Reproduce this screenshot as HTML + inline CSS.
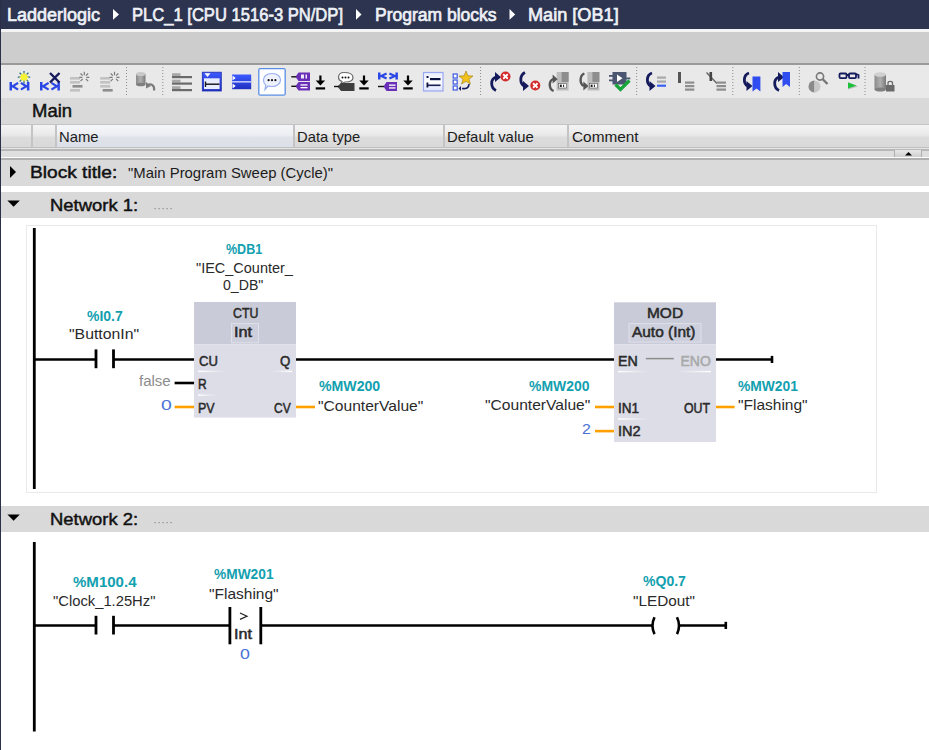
<!DOCTYPE html><html><head><meta charset="utf-8"><style>
html,body{margin:0;padding:0;width:929px;height:750px;overflow:hidden;background:#fff;font-family:"Liberation Sans",sans-serif;}
body{position:relative;}
</style></head><body>
<div style="position:absolute;left:0px;top:0px;width:929px;height:29px;background:#2d3450"></div>
<div style="position:absolute;left:7.14px;top:6px;font-size:18.8px;line-height:18.8px;font-weight:normal;-webkit-text-stroke:0.7px #eef1f6;color:#eef1f6;white-space:nowrap;transform-origin:0 0;transform:scaleX(0.9573)">Ladderlogic</div>
<div style="position:absolute;left:132.42px;top:6px;font-size:18.8px;line-height:18.8px;font-weight:normal;-webkit-text-stroke:0.7px #eef1f6;color:#eef1f6;white-space:nowrap;transform-origin:0 0;transform:scaleX(0.8827)">PLC_1 [CPU 1516-3 PN/DP]</div>
<div style="position:absolute;left:374.97px;top:6px;font-size:18.8px;line-height:18.8px;font-weight:normal;-webkit-text-stroke:0.7px #eef1f6;color:#eef1f6;white-space:nowrap;transform-origin:0 0;transform:scaleX(0.9318)">Program blocks</div>
<div style="position:absolute;left:528.23px;top:6px;font-size:18.8px;line-height:18.8px;font-weight:normal;-webkit-text-stroke:0.7px #eef1f6;color:#eef1f6;white-space:nowrap;transform-origin:0 0;transform:scaleX(0.9652)">Main [OB1]</div>
<svg style="position:absolute;left:0;top:0" width="929" height="29"><polygon points="113,9 119,14.4 113,19.7" fill="#fff"/><polygon points="356,9 361.5,14.4 356,19.7" fill="#fff"/><polygon points="509.5,9 515.2,14.4 509.5,19.7" fill="#fff"/></svg>
<div style="position:absolute;left:0px;top:29px;width:929px;height:3px;background:#f4f4f4"></div>
<div style="position:absolute;left:0px;top:32px;width:929px;height:31px;background:#cdcdcd"></div>
<div style="position:absolute;left:0px;top:63px;width:929px;height:2px;background:#9a9a9a"></div>
<div style="position:absolute;left:0px;top:65px;width:929px;height:33px;background:#e9e9e9"></div>
<div style="position:absolute;left:0px;top:98px;width:929px;height:26px;background:#d9d9d9"></div>
<div style="position:absolute;left:31.94px;top:103px;font-size:17.5px;line-height:17.5px;font-weight:normal;-webkit-text-stroke:0.45px #111;color:#111;white-space:nowrap;transform-origin:0 0;transform:scaleX(1.0556)">Main</div>
<div style="position:absolute;left:0px;top:124px;width:929px;height:1px;background:#c4c4c4"></div>
<div style="position:absolute;left:0px;top:125px;width:929px;height:22px;background:linear-gradient(#f4f4f4,#e9e9e9 45%,#dcdcdc 58%,#d9d9d9)"></div>
<div style="position:absolute;left:56px;top:125px;width:237px;height:22px;background:linear-gradient(#f5f6f9,#eceef3 45%,#dfe2e9 58%,#dce0e8)"></div>
<div style="position:absolute;left:31px;top:125px;width:1.5px;height:22px;background:#c4c4c4"></div>
<div style="position:absolute;left:55px;top:125px;width:1.5px;height:22px;background:#c4c4c4"></div>
<div style="position:absolute;left:293px;top:125px;width:1.5px;height:22px;background:#c4c4c4"></div>
<div style="position:absolute;left:443px;top:125px;width:1.5px;height:22px;background:#c4c4c4"></div>
<div style="position:absolute;left:567px;top:125px;width:1.5px;height:22px;background:#c4c4c4"></div>
<div style="position:absolute;left:0px;top:147px;width:929px;height:1px;background:#c0c0c0"></div>
<div style="position:absolute;left:0px;top:148px;width:929px;height:1px;background:#e6e6e6"></div>
<div style="position:absolute;left:0px;top:149px;width:929px;height:1.5px;background:#b8b8b8"></div>
<div style="position:absolute;left:0px;top:150.5px;width:929px;height:6.5px;background:#dedede"></div>
<div style="position:absolute;left:0px;top:157px;width:929px;height:1px;background:#fcfcfc"></div>
<div style="position:absolute;left:0px;top:158px;width:929px;height:1.5px;background:#b0b0b0"></div>
<div style="position:absolute;left:894px;top:150px;width:28px;height:7px;background:linear-gradient(#e8e8e8,#cfcfcf);border-left:1px solid #b0b0b0;border-right:1px solid #b0b0b0;box-sizing:border-box"></div>
<svg style="position:absolute;left:894px;top:150px" width="28" height="8"><polygon points="11,5.5 18,5.5 14.5,2" fill="#000"/></svg>
<div style="position:absolute;left:59.26px;top:130px;font-size:14.3px;line-height:14.3px;font-weight:normal;color:#1c1c1c;white-space:nowrap;transform-origin:0 0;transform:scaleX(1.0378)">Name</div>
<div style="position:absolute;left:296.77px;top:130px;font-size:14.3px;line-height:14.3px;font-weight:normal;color:#1c1c1c;white-space:nowrap;transform-origin:0 0;transform:scaleX(1.0333)">Data type</div>
<div style="position:absolute;left:446.86px;top:130px;font-size:14.3px;line-height:14.3px;font-weight:normal;color:#1c1c1c;white-space:nowrap;transform-origin:0 0;transform:scaleX(1.0390)">Default value</div>
<div style="position:absolute;left:571.82px;top:130px;font-size:14.3px;line-height:14.3px;font-weight:normal;color:#1c1c1c;white-space:nowrap;transform-origin:0 0;transform:scaleX(1.0754)">Comment</div>
<div style="position:absolute;left:0px;top:159.5px;width:929px;height:26px;background:#dadada"></div>
<svg style="position:absolute;left:0;top:160px" width="30" height="26"><polygon points="10,6 16,12 10,18" fill="#000"/></svg>
<div style="position:absolute;left:29.86px;top:165px;font-size:16.8px;line-height:16.8px;font-weight:normal;-webkit-text-stroke:0.45px #111;color:#111;white-space:nowrap;transform-origin:0 0;transform:scaleX(1.1405)">Block title:</div>
<div style="position:absolute;left:128.16px;top:166px;font-size:14.3px;line-height:14.3px;font-weight:normal;color:#1c1c1c;white-space:nowrap;transform-origin:0 0;transform:scaleX(1.0415)">&quot;Main Program Sweep (Cycle)&quot;</div>
<div style="position:absolute;left:0px;top:185.5px;width:929px;height:6.5px;background:#ffffff"></div>
<div style="position:absolute;left:0px;top:192px;width:929px;height:26px;background:#d9d9d9"></div>
<svg style="position:absolute;left:0;top:192px" width="30" height="26"><polygon points="7.4,8.5 19.8,8.5 13.6,14.7" fill="#000"/></svg>
<div style="position:absolute;left:49.73px;top:197px;font-size:17.2px;line-height:17.2px;font-weight:normal;-webkit-text-stroke:0.45px #111;color:#111;white-space:nowrap;transform-origin:0 0;transform:scaleX(1.0725)">Network 1:</div>
<svg style="position:absolute;left:150px;top:205px" width="30" height="8"><g fill="#8a8a8a"><rect x="4.5" y="3" width="1.2" height="1.2"/><rect x="8.5" y="3" width="1.2" height="1.2"/><rect x="12.5" y="3" width="1.2" height="1.2"/><rect x="16.5" y="3" width="1.2" height="1.2"/><rect x="20.5" y="3" width="1.2" height="1.2"/></g></svg>
<div style="position:absolute;left:0px;top:218px;width:929px;height:288px;background:#fff"></div>
<div style="position:absolute;left:26px;top:225px;width:851px;height:268px;border:1px solid #e9e9e9;box-sizing:border-box"></div>
<div style="position:absolute;left:0px;top:506px;width:929px;height:26px;background:#d9d9d9"></div>
<svg style="position:absolute;left:0;top:506px" width="30" height="26"><polygon points="7.4,8.5 19.8,8.5 13.6,14.7" fill="#000"/></svg>
<div style="position:absolute;left:49.73px;top:511px;font-size:17.2px;line-height:17.2px;font-weight:normal;-webkit-text-stroke:0.45px #111;color:#111;white-space:nowrap;transform-origin:0 0;transform:scaleX(1.0725)">Network 2:</div>
<svg style="position:absolute;left:150px;top:519px" width="30" height="8"><g fill="#8a8a8a"><rect x="4.5" y="3" width="1.2" height="1.2"/><rect x="8.5" y="3" width="1.2" height="1.2"/><rect x="12.5" y="3" width="1.2" height="1.2"/><rect x="16.5" y="3" width="1.2" height="1.2"/><rect x="20.5" y="3" width="1.2" height="1.2"/></g></svg>
<div style="position:absolute;left:0px;top:532px;width:929px;height:218px;background:#fff"></div>
<svg style="position:absolute;left:0;top:0" width="929" height="750"><line x1="34.3" y1="228" x2="34.3" y2="489" stroke="#000" stroke-width="2.8"/><line x1="34" y1="359.5" x2="95.5" y2="359.5" stroke="#000" stroke-width="2.6"/><line x1="96" y1="349.4" x2="96" y2="368.2" stroke="#000" stroke-width="2.8"/><line x1="113.5" y1="349.4" x2="113.5" y2="368.2" stroke="#000" stroke-width="2.8"/><line x1="113" y1="359.5" x2="194" y2="359.5" stroke="#000" stroke-width="2.6"/><rect x="194" y="302" width="102" height="42.3" fill="#c9cbd8" stroke="none"/><rect x="194" y="344.3" width="102" height="73.3" fill="#dcdde6" stroke="none"/><rect x="231.5" y="323.6" width="27" height="19.2" fill="#cdd0dc" stroke="#dfe0e8"/><defs><linearGradient id="ulR" x1="0" x2="1"><stop offset="0" stop-color="#fff" stop-opacity="1"/><stop offset="1" stop-color="#fff" stop-opacity="0"/></linearGradient><linearGradient id="ulL" x1="1" x2="0"><stop offset="0" stop-color="#fff" stop-opacity="1"/><stop offset="1" stop-color="#fff" stop-opacity="0"/></linearGradient></defs><rect x="198" y="370.6" width="28" height="1.5" fill="url(#ulR)" stroke="none"/><rect x="272" y="370.6" width="20" height="1.5" fill="url(#ulL)" stroke="none"/><rect x="198" y="394.4" width="18" height="1.5" fill="url(#ulR)" stroke="none"/><line x1="174.6" y1="383" x2="194" y2="383" stroke="#000" stroke-width="2.6"/><line x1="174.6" y1="407.0" x2="194" y2="407.0" stroke="#ffa000" stroke-width="2.6"/><line x1="296" y1="359.5" x2="614" y2="359.5" stroke="#000" stroke-width="2.6"/><line x1="296" y1="407.0" x2="315" y2="407.0" stroke="#ffa000" stroke-width="2.6"/><rect x="614" y="302.3" width="102" height="42" fill="#c9cbd8" stroke="none"/><rect x="614" y="344.3" width="102" height="97.7" fill="#dcdde6" stroke="none"/><rect x="629" y="323.6" width="72" height="18.5" fill="#cdd0dc" stroke="#dfe0e8"/><line x1="645.8" y1="358.6" x2="673.8" y2="358.6" stroke="#8d8d8d" stroke-width="1.5"/><rect x="618" y="370.8" width="30" height="1.5" fill="url(#ulR)" stroke="none"/><rect x="678" y="370.8" width="33" height="1.5" fill="url(#ulL)" stroke="none"/><rect x="618" y="418.2" width="32" height="1.5" fill="url(#ulR)" stroke="none"/><line x1="595" y1="407.0" x2="614" y2="407.0" stroke="#ffa000" stroke-width="2.6"/><line x1="595" y1="431.1" x2="614" y2="431.1" stroke="#ffa000" stroke-width="2.6"/><line x1="716" y1="359.5" x2="773" y2="359.5" stroke="#000" stroke-width="2.6"/><line x1="772" y1="355.9" x2="772" y2="363" stroke="#000" stroke-width="2.6"/><line x1="716" y1="407.0" x2="734.6" y2="407.0" stroke="#ffa000" stroke-width="2.6"/><line x1="34.3" y1="542" x2="34.3" y2="731.5" stroke="#000" stroke-width="2.8"/><line x1="34" y1="625.5" x2="95.5" y2="625.5" stroke="#000" stroke-width="2.6"/><line x1="96" y1="615.8" x2="96" y2="634.5" stroke="#000" stroke-width="2.8"/><line x1="113.5" y1="615.8" x2="113.5" y2="634.5" stroke="#000" stroke-width="2.8"/><line x1="113" y1="625.5" x2="230" y2="625.5" stroke="#000" stroke-width="2.6"/><line x1="229.9" y1="607" x2="229.9" y2="644.3" stroke="#000" stroke-width="2.8"/><line x1="260.8" y1="607" x2="260.8" y2="644.3" stroke="#000" stroke-width="2.8"/><line x1="260" y1="625.5" x2="652" y2="625.5" stroke="#000" stroke-width="2.6"/><path d="M654.5,617.3 Q650.5,625.7 654.5,634.1" fill="none" stroke="#000" stroke-width="2.6"/><path d="M677,617.3 Q681,625.7 677,634.1" fill="none" stroke="#000" stroke-width="2.6"/><line x1="679.5" y1="625.5" x2="727" y2="625.5" stroke="#000" stroke-width="2.6"/><line x1="725.8" y1="621.8" x2="725.8" y2="629" stroke="#000" stroke-width="2.6"/><path d="M240,613 L247,616.2 L240,619.4" fill="none" stroke="#222" stroke-width="1.2"/></svg>
<div style="position:absolute;left:87.10px;top:309px;font-size:14.8px;line-height:14.8px;font-weight:bold;color:#12a0b0;white-space:nowrap;transform-origin:0 0;transform:scaleX(0.9432)">%I0.7</div>
<div style="position:absolute;left:69.13px;top:327px;font-size:14.8px;line-height:14.8px;font-weight:normal;color:#2a2a2a;white-space:nowrap;transform-origin:0 0;transform:scaleX(1.0672)">&quot;ButtonIn&quot;</div>
<div style="position:absolute;left:226.10px;top:242px;font-size:14.8px;line-height:14.8px;font-weight:bold;color:#12a0b0;white-space:nowrap;transform-origin:0 0;transform:scaleX(0.8452)">%DB1</div>
<div style="position:absolute;left:195.52px;top:261px;font-size:14.8px;line-height:14.8px;font-weight:normal;color:#2a2a2a;white-space:nowrap;transform-origin:0 0;transform:scaleX(0.9786)">&quot;IEC_Counter_</div>
<div style="position:absolute;left:222.75px;top:278px;font-size:14.8px;line-height:14.8px;font-weight:normal;color:#2a2a2a;white-space:nowrap;transform-origin:0 0;transform:scaleX(0.9537)">0_DB&quot;</div>
<div style="position:absolute;left:232.60px;top:306px;font-size:14px;line-height:14px;font-weight:normal;-webkit-text-stroke:0.5px #2a2a2a;color:#2a2a2a;white-space:nowrap;transform-origin:0 0;transform:scaleX(0.8821)">CTU</div>
<div style="position:absolute;left:233.64px;top:325px;font-size:14px;line-height:14px;font-weight:normal;-webkit-text-stroke:0.5px #2a2a2a;color:#2a2a2a;white-space:nowrap;transform-origin:0 0;transform:scaleX(1.1600)">Int</div>
<div style="position:absolute;left:198.90px;top:354px;font-size:14px;line-height:14px;font-weight:normal;-webkit-text-stroke:0.5px #2a2a2a;color:#2a2a2a;white-space:nowrap;transform-origin:0 0;transform:scaleX(0.9316)">CU</div>
<div style="position:absolute;left:280.00px;top:354px;font-size:14px;line-height:14px;font-weight:normal;-webkit-text-stroke:0.5px #2a2a2a;color:#2a2a2a;white-space:nowrap;transform-origin:0 0;transform:scaleX(0.9455)">Q</div>
<div style="position:absolute;left:198.04px;top:377px;font-size:14px;line-height:14px;font-weight:normal;-webkit-text-stroke:0.5px #2a2a2a;color:#2a2a2a;white-space:nowrap;transform-origin:0 0;transform:scaleX(0.8556)">R</div>
<div style="position:absolute;left:198.01px;top:401px;font-size:14px;line-height:14px;font-weight:normal;-webkit-text-stroke:0.5px #2a2a2a;color:#2a2a2a;white-space:nowrap;transform-origin:0 0;transform:scaleX(0.8889)">PV</div>
<div style="position:absolute;left:273.50px;top:401px;font-size:14px;line-height:14px;font-weight:normal;-webkit-text-stroke:0.5px #2a2a2a;color:#2a2a2a;white-space:nowrap;transform-origin:0 0;transform:scaleX(0.8550)">CV</div>
<div style="position:absolute;left:138.90px;top:374px;font-size:14px;line-height:14px;font-weight:normal;color:#8c8c8c;white-space:nowrap;transform-origin:0 0;transform:scaleX(1.0724)">false</div>
<div style="position:absolute;left:161.32px;top:398px;font-size:14px;line-height:14px;font-weight:normal;color:#4a72d6;white-space:nowrap;transform-origin:0 0;transform:scaleX(1.3833)">0</div>
<div style="position:absolute;left:318.60px;top:379px;font-size:14.8px;line-height:14.8px;font-weight:bold;color:#12a0b0;white-space:nowrap;transform-origin:0 0;transform:scaleX(0.9547)">%MW200</div>
<div style="position:absolute;left:317.55px;top:399px;font-size:14.8px;line-height:14.8px;font-weight:normal;color:#2a2a2a;white-space:nowrap;transform-origin:0 0;transform:scaleX(1.0541)">&quot;CounterValue&quot;</div>
<div style="position:absolute;left:529.00px;top:379px;font-size:14.8px;line-height:14.8px;font-weight:bold;color:#12a0b0;white-space:nowrap;transform-origin:0 0;transform:scaleX(0.9422)">%MW200</div>
<div style="position:absolute;left:484.95px;top:398px;font-size:14.8px;line-height:14.8px;font-weight:normal;color:#2a2a2a;white-space:nowrap;transform-origin:0 0;transform:scaleX(1.0541)">&quot;CounterValue&quot;</div>
<div style="position:absolute;left:582.07px;top:422px;font-size:14px;line-height:14px;font-weight:normal;color:#4a72d6;white-space:nowrap;transform-origin:0 0;transform:scaleX(1.1333)">2</div>
<div style="position:absolute;left:646.60px;top:306px;font-size:14px;line-height:14px;font-weight:normal;-webkit-text-stroke:0.5px #2a2a2a;color:#2a2a2a;white-space:nowrap;transform-origin:0 0;transform:scaleX(1.1032)">MOD</div>
<div style="position:absolute;left:632.20px;top:325px;font-size:14px;line-height:14px;font-weight:normal;-webkit-text-stroke:0.5px #2a2a2a;color:#2a2a2a;white-space:nowrap;transform-origin:0 0;transform:scaleX(1.1018)">Auto (Int)</div>
<div style="position:absolute;left:617.68px;top:354px;font-size:14px;line-height:14px;font-weight:normal;-webkit-text-stroke:0.5px #2a2a2a;color:#2a2a2a;white-space:nowrap;transform-origin:0 0;transform:scaleX(1.0167)">EN</div>
<div style="position:absolute;left:680.50px;top:354px;font-size:14px;line-height:14px;font-weight:normal;-webkit-text-stroke:0.5px #a9a9a9;color:#a9a9a9;white-space:nowrap;transform-origin:0 0;transform:scaleX(1.0000)">ENO</div>
<div style="position:absolute;left:617.73px;top:401px;font-size:14px;line-height:14px;font-weight:normal;-webkit-text-stroke:0.5px #2a2a2a;color:#2a2a2a;white-space:nowrap;transform-origin:0 0;transform:scaleX(0.9667)">IN1</div>
<div style="position:absolute;left:684.40px;top:401px;font-size:14px;line-height:14px;font-weight:normal;-webkit-text-stroke:0.5px #2a2a2a;color:#2a2a2a;white-space:nowrap;transform-origin:0 0;transform:scaleX(0.8833)">OUT</div>
<div style="position:absolute;left:617.66px;top:424px;font-size:14px;line-height:14px;font-weight:normal;-webkit-text-stroke:0.5px #2a2a2a;color:#2a2a2a;white-space:nowrap;transform-origin:0 0;transform:scaleX(1.0381)">IN2</div>
<div style="position:absolute;left:738.40px;top:379px;font-size:14.8px;line-height:14.8px;font-weight:bold;color:#12a0b0;white-space:nowrap;transform-origin:0 0;transform:scaleX(0.9344)">%MW201</div>
<div style="position:absolute;left:737.95px;top:398px;font-size:14.8px;line-height:14.8px;font-weight:normal;color:#2a2a2a;white-space:nowrap;transform-origin:0 0;transform:scaleX(1.0477)">&quot;Flashing&quot;</div>
<div style="position:absolute;left:73.40px;top:575px;font-size:14.8px;line-height:14.8px;font-weight:bold;color:#12a0b0;white-space:nowrap;transform-origin:0 0;transform:scaleX(1.0159)">%M100.4</div>
<div style="position:absolute;left:53.00px;top:594px;font-size:14.8px;line-height:14.8px;font-weight:normal;color:#2a2a2a;white-space:nowrap;transform-origin:0 0;transform:scaleX(0.9980)">&quot;Clock_1.25Hz&quot;</div>
<div style="position:absolute;left:213.90px;top:567px;font-size:14.8px;line-height:14.8px;font-weight:bold;color:#12a0b0;white-space:nowrap;transform-origin:0 0;transform:scaleX(0.9281)">%MW201</div>
<div style="position:absolute;left:209.25px;top:587px;font-size:14.8px;line-height:14.8px;font-weight:normal;color:#2a2a2a;white-space:nowrap;transform-origin:0 0;transform:scaleX(1.0477)">&quot;Flashing&quot;</div>
<div style="position:absolute;left:234.05px;top:627px;font-size:14px;line-height:14px;font-weight:normal;-webkit-text-stroke:0.5px #2a2a2a;color:#2a2a2a;white-space:nowrap;transform-origin:0 0;transform:scaleX(1.1533)">Int</div>
<div style="position:absolute;left:239.53px;top:647px;font-size:14px;line-height:14px;font-weight:normal;color:#4a72d6;white-space:nowrap;transform-origin:0 0;transform:scaleX(1.2667)">0</div>
<div style="position:absolute;left:643.20px;top:574px;font-size:14.8px;line-height:14.8px;font-weight:bold;color:#12a0b0;white-space:nowrap;transform-origin:0 0;transform:scaleX(0.9489)">%Q0.7</div>
<div style="position:absolute;left:632.57px;top:594px;font-size:14.8px;line-height:14.8px;font-weight:normal;color:#2a2a2a;white-space:nowrap;transform-origin:0 0;transform:scaleX(1.0345)">&quot;LEDout&quot;</div>
<div style="position:absolute;left:0px;top:0px;width:1px;height:750px;background:#2a3048"></div>
<svg style="position:absolute;left:0;top:0" width="929" height="98"><rect x="9.5" y="82" width="2.5" height="8.5" fill="#2b47e6"/><path d="M18.1,82.9 L12.7,86.25 L18.1,89.6" fill="none" stroke="#2b47e6" stroke-width="2.2"/><rect x="11.5" y="85.25" width="2.5" height="2" fill="#2b47e6"/><path d="M20.9,82.9 L26.3,86.25 L20.9,89.6" fill="none" stroke="#2b47e6" stroke-width="2.2"/><rect x="25.0" y="85.25" width="2.5" height="2" fill="#2b47e6"/><rect x="26.9" y="82" width="2.5" height="8.5" fill="#2b47e6"/><g stroke="#2a6a8a" stroke-width="1.3"><path d="M24,71 L24,83.5 M17.8,77.2 L30.2,77.2 M19.6,72.8 L28.4,81.6 M28.4,72.8 L19.6,81.6"/></g><g stroke="#f6f22a" stroke-width="1.4"><path d="M24,72.8 L24,81.6 M19.6,77.2 L28.4,77.2 M21,74.2 L27,80.2 M27,74.2 L21,80.2"/></g><circle cx="24" cy="77.2" r="3" fill="#f8f430"/><rect x="40" y="82" width="2.5" height="8.5" fill="#2b47e6"/><path d="M48.6,82.9 L43.2,86.25 L48.6,89.6" fill="none" stroke="#2b47e6" stroke-width="2.2"/><rect x="42" y="85.25" width="2.5" height="2" fill="#2b47e6"/><path d="M51.4,82.9 L56.8,86.25 L51.4,89.6" fill="none" stroke="#2b47e6" stroke-width="2.2"/><rect x="55.5" y="85.25" width="2.5" height="2" fill="#2b47e6"/><rect x="57.4" y="82" width="2.5" height="8.5" fill="#2b47e6"/><path d="M50,73 L59.5,82.5 M59.5,73 L50,82.5" stroke="#141a5c" stroke-width="2.4"/><rect x="70" y="77" width="10" height="2.6" fill="#c2c2c2"/><rect x="70" y="81" width="10" height="2.6" fill="#c2c2c2"/><rect x="72.5" y="85" width="10" height="2.6" fill="#8d8d8d"/><rect x="70" y="89" width="10" height="2.6" fill="#c2c2c2"/><g stroke="#7a7a7a" stroke-width="1.2"><path d="M84.3,71.8 L84.3,75.3 M89.3,77.3 L86.3,77.3 M80.5,73.5 L82.7,75.7 M88.1,73.5 L85.89999999999999,75.7 M88.1,81.1 L85.89999999999999,78.89999999999999 M80.5,81.1 L82.7,78.89999999999999 M79.3,77.3 L82.3,77.3"/></g><rect x="100.2" y="77" width="10" height="2.6" fill="#c2c2c2"/><rect x="100.2" y="81" width="10" height="2.6" fill="#c2c2c2"/><rect x="100.2" y="85" width="10" height="2.6" fill="#c2c2c2"/><rect x="102.7" y="89" width="10" height="2.6" fill="#8d8d8d"/><g stroke="#7a7a7a" stroke-width="1.2"><path d="M114.5,71.8 L114.5,75.3 M119.5,77.3 L116.5,77.3 M110.7,73.5 L112.9,75.7 M118.3,73.5 L116.1,75.7 M118.3,81.1 L116.1,78.89999999999999 M110.7,81.1 L112.9,78.89999999999999 M109.5,77.3 L112.5,77.3"/></g><line x1="126.5" y1="67" x2="126.5" y2="95.5" stroke="#8c8c8c" stroke-width="1" stroke-dasharray="1,2"/><defs><linearGradient id="cyl" x1="0" x2="1"><stop offset="0" stop-color="#8a8a8a"/><stop offset="0.5" stop-color="#b0b0b0"/><stop offset="1" stop-color="#7a7a7a"/></linearGradient></defs><rect x="136" y="74" width="9.5" height="10.5" fill="url(#cyl)"/><ellipse cx="140.75" cy="74" rx="4.75" ry="2" fill="#c8c8c8"/><ellipse cx="140.75" cy="84.5" rx="4.75" ry="1.8" fill="#7f7f7f"/><path d="M147.5,85 C151,83 155,85.5 154,90.5" fill="none" stroke="#7c7c7c" stroke-width="2.2"/><polygon points="146,82 146,88.5 151,86" fill="#7c7c7c"/><line x1="162.8" y1="67" x2="162.8" y2="95.5" stroke="#8c8c8c" stroke-width="1" stroke-dasharray="1,2"/><rect x="172" y="73.2" width="8.5" height="2.8" fill="#a8a8a8"/><rect x="172" y="76" width="20" height="2.2" fill="#6a6a6a"/><rect x="172" y="79.7" width="8.5" height="2.8" fill="#a8a8a8"/><rect x="172" y="82.5" width="20" height="2.2" fill="#6a6a6a"/><rect x="172" y="86.2" width="8.5" height="2.8" fill="#a8a8a8"/><rect x="172" y="89" width="20" height="2.2" fill="#6a6a6a"/><defs><linearGradient id="bl" x1="0" x2="0" y1="0" y2="1"><stop offset="0" stop-color="#3d5bff"/><stop offset="1" stop-color="#1f2fc0"/></linearGradient></defs><rect x="202.3" y="72.2" width="19" height="18.8" fill="url(#bl)" stroke="#2030b0" stroke-width="0.8"/><rect x="204" y="78.3" width="15.6" height="10.8" fill="#e8ecff"/><polygon points="204.5,73.3 210.5,73.3 207.5,77" fill="#fff"/><rect x="205" y="83.5" width="14.5" height="1.4" fill="#111"/><rect x="204.8" y="81.5" width="1.4" height="5.4" fill="#111"/><rect x="232" y="74.5" width="19.2" height="14.7" fill="url(#bl)"/><rect x="232" y="81.2" width="19.2" height="1.3" fill="#dde4ff"/><polygon points="232.5,75.5 235.7,78 232.5,80.5" fill="#fff"/><polygon points="232.5,83.5 235.7,86 232.5,88.5" fill="#fff"/><rect x="258.8" y="68.6" width="26.4" height="26.6" rx="1.5" fill="#fbfdff" stroke="#5d8ee6" stroke-width="1.3"/><path d="M272,73.5 C277.5,73.5 280.5,76.5 280.5,80 C280.5,84 276.5,86.5 272,86.5 C270.5,86.5 269,86.3 268,86 L265,89.5 L265.8,85 C264,83.8 263.5,82 263.5,80 C263.5,76.5 266.5,73.5 272,73.5 Z" fill="#eef2ff" stroke="#9aaef0" stroke-width="1.2"/><circle cx="268.6" cy="80.2" r="1.1" fill="#111"/><circle cx="272" cy="80.2" r="1.1" fill="#111"/><circle cx="275.4" cy="80.2" r="1.1" fill="#111"/><polygon points="295.5,76.8 298.5,72.5 310,72.5 310,81.1 298.5,81.1" fill="#6a2fb8"/><rect x="291.3" y="76.1" width="5" height="1.4" fill="#111"/><polygon points="295.5,86.3 298.5,82 310,82 310,90.6 298.5,90.6" fill="#6a2fb8"/><rect x="291.3" y="85.6" width="5" height="1.4" fill="#111"/><rect x="301" y="74.5" width="3" height="4" fill="#fff" opacity="0.9"/><rect x="305.5" y="74.5" width="1.5" height="4" fill="#fff" opacity="0.9"/><rect x="300.5" y="84.3" width="7" height="1.3" fill="#fff"/><rect x="300.5" y="87" width="7" height="1.3" fill="#fff"/><rect x="319.29999999999995" y="75.5" width="2.2" height="6" fill="#000"/><polygon points="315.7,80.5 325.09999999999997,80.5 320.4,85.5" fill="#000"/><rect x="315.7" y="87.3" width="9.4" height="2.2" fill="#000"/><path d="M344,72.5 C350,72.5 353,74.5 353,77.5 C353,80.5 349.5,82 345,82 L341,84 L342,81.5 C339.5,80.5 338.5,79 338.5,77.5 C338.5,74.5 340.5,72.5 344,72.5Z" fill="#fff" stroke="#6a6a6a" stroke-width="1.2"/><circle cx="342.5" cy="77.5" r="1" fill="#111"/><circle cx="345.5" cy="77.5" r="1" fill="#111"/><circle cx="348.5" cy="77.5" r="1" fill="#111"/><polygon points="337.5,86.5 341,83 354.5,83 354.5,91 341,91" fill="#3e3e3e"/><rect x="334" y="85.8" width="5" height="1.4" fill="#111"/><rect x="362.9" y="75.5" width="2.2" height="6" fill="#000"/><polygon points="359.3,80.5 368.7,80.5 364,85.5" fill="#000"/><rect x="359.3" y="87.3" width="9.4" height="2.2" fill="#000"/><rect x="378" y="72.5" width="2.5" height="7" fill="#2b47e6"/><path d="M386.6,73.4 L381.2,76.0 L386.6,78.6" fill="none" stroke="#2b47e6" stroke-width="2.2"/><rect x="380" y="75.0" width="2.5" height="2" fill="#2b47e6"/><path d="M389.4,73.4 L394.8,76.0 L389.4,78.6" fill="none" stroke="#2b47e6" stroke-width="2.2"/><rect x="393.5" y="75.0" width="2.5" height="2" fill="#2b47e6"/><rect x="395.4" y="72.5" width="2.5" height="7" fill="#2b47e6"/><polygon points="383.5,86.5 386.5,82 397,82 397,91 386.5,91" fill="#6a2fb8"/><rect x="378" y="85.8" width="6" height="1.4" fill="#111"/><rect x="389" y="84.5" width="6.5" height="1.3" fill="#fff"/><rect x="389" y="87.3" width="6.5" height="1.3" fill="#fff"/><rect x="406.9" y="75.5" width="2.2" height="6" fill="#000"/><polygon points="403.3,80.5 412.7,80.5 408,85.5" fill="#000"/><rect x="403.3" y="87.3" width="9.4" height="2.2" fill="#000"/><defs><linearGradient id="lb" x1="0" x2="0" y1="0" y2="1"><stop offset="0" stop-color="#e8ecff"/><stop offset="0.5" stop-color="#ffffff"/><stop offset="1" stop-color="#dde3ff"/></linearGradient></defs><rect x="423.5" y="72.5" width="19.5" height="18.5" fill="url(#lb)" stroke="#9aa8f0" stroke-width="1.2"/><rect x="426.5" y="76" width="2" height="2" fill="#0d1240"/><rect x="430" y="78" width="10.5" height="2.2" fill="#0d1240"/><rect x="427" y="84.5" width="13.5" height="1.6" fill="#1a1f50"/><rect x="426.5" y="82.5" width="1.8" height="5" fill="#0d1240"/><rect x="453.2" y="74" width="4" height="4" fill="#fff" stroke="#3a58e0" stroke-width="1.2"/><rect x="453.2" y="80" width="4" height="4" fill="#fff" stroke="#3a58e0" stroke-width="1.2"/><rect x="453.2" y="86" width="4" height="4" fill="#fff" stroke="#3a58e0" stroke-width="1.2"/><polygon points="466,71 467.9,75.8 473,76 469,79.2 470.4,84 466,81.3 461.6,84 463,79.2 459,76 464.1,75.8" fill="#f2c21a" stroke="#9a7a10" stroke-width="0.6"/><path d="M469,84 C469,88 466,89 462,88.5" fill="none" stroke="#141a5c" stroke-width="1.6"/><polygon points="461,86 461,91 458.5,88.5" fill="#141a5c"/><line x1="480.6" y1="67" x2="480.6" y2="95.5" stroke="#8c8c8c" stroke-width="1" stroke-dasharray="1,2"/><path d="M496,90.5 C490.5,88 490,79 496,77" fill="none" stroke="#141a5c" stroke-width="2.8"/><polygon points="495,72 501,77.2 495,82" fill="#141a5c"/><circle cx="505.5" cy="76.5" r="5" fill="#d42a2a"/><path d="M503.25,74.25 L507.75,78.75 M507.75,74.25 L503.25,78.75" stroke="#fff" stroke-width="1.8"/><path d="M525,72.5 C519.5,75 519.5,84 524.5,86" fill="none" stroke="#141a5c" stroke-width="2.8"/><polygon points="523,81 529,86 523,91" fill="#141a5c"/><circle cx="535.3" cy="85.5" r="5" fill="#d42a2a"/><path d="M533.05,83.25 L537.55,87.75 M537.55,83.25 L533.05,87.75" stroke="#fff" stroke-width="1.8"/><rect x="556.6" y="72" width="12" height="18.5" fill="#bdbdbd"/><rect x="561.6" y="72" width="7" height="10" fill="#8e8e8e"/><rect x="558.6" y="83.5" width="8" height="4.5" fill="#fff" stroke="#555" stroke-width="0.6"/><rect x="559.8000000000001" y="84.6" width="2" height="2.4" fill="#222"/><rect x="563.1" y="84.6" width="1" height="2.4" fill="#222"/><path d="M553.6,91 C548.6,89 548.6,81 553.1,79" fill="none" stroke="#555" stroke-width="2.4"/><polygon points="552.6,74.5 557.6,79.2 552.6,83.5" fill="#555"/><rect x="587.4" y="72" width="12" height="18.5" fill="#bdbdbd"/><rect x="592.4" y="72" width="7" height="10" fill="#8e8e8e"/><rect x="589.4" y="83.5" width="8" height="4.5" fill="#fff" stroke="#555" stroke-width="0.6"/><rect x="590.6" y="84.6" width="2" height="2.4" fill="#222"/><rect x="593.9" y="84.6" width="1" height="2.4" fill="#222"/><path d="M584.4,73.5 C579.4,75.5 579.4,84 583.9,86" fill="none" stroke="#555" stroke-width="2.4"/><polygon points="583.4,81.5 588.4,86 583.4,90.5" fill="#555"/><rect x="612.5" y="72" width="14" height="12.5" fill="#4b5670"/><polygon points="617,74.5 622.5,78.2 617,82" fill="#fff"/><rect x="609" y="75" width="4" height="1.8" fill="#4b5670"/><rect x="609" y="79.5" width="4" height="1.8" fill="#4b5670"/><rect x="626" y="77.5" width="4.3" height="1.8" fill="#4b5670"/><path d="M615.5,84.5 L620.5,89.5 L629.5,80.5" fill="none" stroke="#17a43a" stroke-width="3.2"/><line x1="636.7" y1="67" x2="636.7" y2="95.5" stroke="#8c8c8c" stroke-width="1" stroke-dasharray="1,2"/><path d="M652,73 C646,75 646,84 651,86" fill="none" stroke="#141a5c" stroke-width="2.8"/><polygon points="649.5,81 655.5,86 649.5,91" fill="#141a5c"/><rect x="657" y="76.5" width="9" height="2.2" fill="#a8a8a8"/><rect x="657" y="80.5" width="9" height="2.2" fill="#a8a8a8"/><rect x="657" y="84.6" width="9" height="2.2" fill="#3a62f0"/><rect x="678" y="72" width="3" height="11" fill="#555"/><rect x="685" y="81.5" width="9.3" height="2.2" fill="#8e8e8e"/><rect x="685" y="85" width="9.3" height="2.2" fill="#8e8e8e"/><rect x="685" y="88.5" width="9.3" height="2.2" fill="#8e8e8e"/><path d="M706.5,72.5 L717,83.5" stroke="#666" stroke-width="1.4"/><rect x="709.5" y="72" width="2.6" height="9" fill="#444"/><rect x="716.5" y="81.5" width="9.5" height="2.2" fill="#8e8e8e"/><rect x="716.5" y="85" width="9.5" height="2.2" fill="#8e8e8e"/><rect x="716.5" y="88.5" width="9.5" height="2.2" fill="#8e8e8e"/><line x1="732.8" y1="67" x2="732.8" y2="95.5" stroke="#8c8c8c" stroke-width="1" stroke-dasharray="1,2"/><path d="M749,73 C743,75 743,84 748,86" fill="none" stroke="#141a5c" stroke-width="2.8"/><polygon points="746.5,81 752.5,86 746.5,91" fill="#141a5c"/><polygon points="752.5,76.5 760.4,76.5 760.4,91.5 756.5,88.5 752.5,91.5" fill="#2f4cf0"/><path d="M779,90.5 C773.5,88 773,79 779,77" fill="none" stroke="#141a5c" stroke-width="2.8"/><polygon points="778,72 784,77.2 778,82" fill="#141a5c"/><polygon points="782.5,72 790,72 790,87 786.2,84 782.5,87" fill="#2f4cf0"/><line x1="799.3" y1="67" x2="799.3" y2="95.5" stroke="#8c8c8c" stroke-width="1" stroke-dasharray="1,2"/><path d="M814.5,80.5 A6,6 0 0 0 814.5,92.5 Z" fill="#8a8a8a"/><path d="M814.5,80.5 A6,6 0 0 1 814.5,92.5 Z" fill="#c8c8c8"/><circle cx="820" cy="76.5" r="3.6" fill="none" stroke="#777" stroke-width="1.6"/><path d="M822.5,79 L827.5,84" stroke="#777" stroke-width="2.4"/><g fill="none" stroke="#141a5c" stroke-width="1.8"><rect x="839.5" y="73.5" width="7" height="4.6" rx="1"/><rect x="849" y="73.5" width="7" height="4.6" rx="1"/><path d="M846.5,75 L849,75 M856,74 L858.5,75 L858.5,78.5"/></g><polygon points="848,82 848,89.5 858,86.5" fill="#bdbdbd"/><polygon points="848,82.5 848,88.5 856.5,85.5" fill="#1cc23a"/><line x1="865" y1="67" x2="865" y2="95.5" stroke="#8c8c8c" stroke-width="1" stroke-dasharray="1,2"/><rect x="874.5" y="74.5" width="11.5" height="15" fill="url(#cyl)"/><ellipse cx="880.25" cy="74.5" rx="5.75" ry="2.3" fill="#d0d0d0"/><ellipse cx="880.25" cy="89.5" rx="5.75" ry="2" fill="#7f7f7f"/><rect x="886" y="85" width="8.5" height="6.5" fill="#6a6a6a"/><path d="M888,85 L888,83 C888,80.8 892.5,80.8 892.5,83 L892.5,85" fill="none" stroke="#6a6a6a" stroke-width="1.3"/></svg>
</body></html>
